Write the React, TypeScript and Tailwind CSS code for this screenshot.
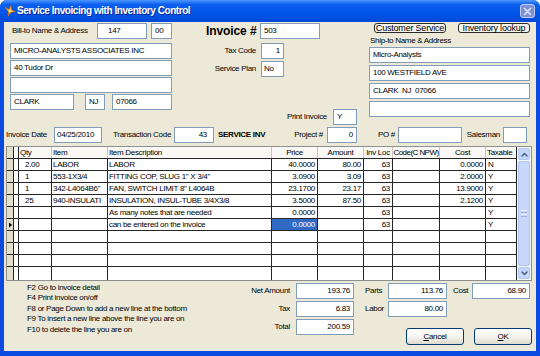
import React from "react";

type Kids = { children?: React.ReactNode };

const base = "font-['Liberation_Sans',Arial,sans-serif] text-[8px] tracking-[-0.3px] leading-none text-black";

function Field({ w, pad = "px-[3px]", right = false, children }: { w: string; pad?: string; right?: boolean } & Kids) {
  return (
    <div
      className={`${w} h-[16px] shrink-0 bg-white border border-[#7F9DB9] flex items-center overflow-hidden ${
        right ? "justify-end" : "justify-start"
      } ${pad}`}
    >
      <span className="whitespace-nowrap">{children}</span>
    </div>
  );
}

function SmallButton({ w, children }: { w: string } & Kids) {
  return (
    <div
      className={`${w} h-[10px] shrink-0 rounded-[3px] border border-[#2b2b2b] bg-[#F6F5F0] flex items-center justify-center text-[9px] tracking-[-0.2px]`}
    >
      {children}
    </div>
  );
}

function XpButton({ ml = "", children }: { ml?: string } & Kids) {
  return (
    <div
      className={`${ml} w-[58px] h-[17px] rounded-[3px] border border-[#003C74] bg-linear-to-b from-white via-[#F5F4EF] to-[#DEDBCF] flex items-center justify-center`}
    >
      {children}
    </div>
  );
}

function Chevron({ up }: { up?: boolean }) {
  return (
    <svg width="7" height="5" viewBox="0 0 7 5">
      <path
        d={up ? "M1 4 L3.5 1.5 L6 4" : "M1 1 L3.5 3.5 L6 1"}
        fill="none"
        stroke="#4D6185"
        strokeWidth="1.5"
        strokeLinecap="round"
        strokeLinejoin="round"
      />
    </svg>
  );
}

const cols = [
  { w: "w-[7px]", head: "", h: "", d: "" },
  { w: "w-[5px]", head: "", h: "", d: "" },
  { w: "w-[33px]", head: "Qty", h: "justify-start pl-[1px]", d: "justify-start pl-[6px]" },
  { w: "w-[56px]", head: "Item", h: "justify-start pl-[1px]", d: "justify-start pl-[1px]" },
  { w: "w-[164px]", head: "Item Description", h: "justify-start pl-[1px]", d: "justify-start pl-[1px]" },
  { w: "w-[46px]", head: "Price", h: "justify-center", d: "justify-end pr-[2px]" },
  { w: "w-[46px]", head: "Amount", h: "justify-center", d: "justify-end pr-[2px]" },
  { w: "w-[29px]", head: "Inv Loc", h: "justify-center", d: "justify-end pr-[2px]" },
  { w: "w-[47px]", head: "Code(C NPW)", h: "justify-center tracking-[-0.55px]", d: "justify-end pr-[2px]" },
  { w: "w-[46px]", head: "Cost", h: "justify-center", d: "justify-end pr-[2px]" },
  { w: "w-[31px]", head: "Taxable", h: "justify-start pl-[1px]", d: "justify-start pl-[2px]" },
];

const rows: string[][] = [
  ["2.00", "LABOR", "LABOR", "40.0000", "80.00", "63", "", "0.0000", "N"],
  ["1", "553-1X3/4", 'FITTING COP, SLUG 1" X 3/4"', "3.0900", "3.09", "63", "", "2.0000", "Y"],
  ["1", '342-L4064B6"', 'FAN, SWITCH LIMIT 8" L4064B', "23.1700", "23.17", "63", "", "13.9000", "Y"],
  ["25", "940-INSULATI", "INSULATION, INSUL-TUBE 3/4X3/8", "3.5000", "87.50", "63", "", "2.1200", "Y"],
  ["", "", "As many notes that are needed", "0.0000", "", "63", "", "", "Y"],
  ["", "", "can be entered on the invoice", "0.0000", "", "63", "", "", "Y"],
  ["", "", "", "", "", "", "", "", ""],
  ["", "", "", "", "", "", "", "", ""],
  ["", "", "", "", "", "", "", "", ""],
  ["", "", "", "", "", "", "", "", ""],
];

function DetailGrid() {
  return (
    <div className="ml-[2px] mt-[3px] w-[526px] h-[135px] border border-[#8E8F8F] flex overflow-hidden bg-white">
      <div className="w-[510px] flex flex-col">
        <div className="h-[12px] flex shrink-0 border-b border-[#262626] bg-[#F9F8F4]">
          {cols.map((c, i) => (
            <div
              key={i}
              className={`${c.w} shrink-0 h-full flex items-center whitespace-nowrap overflow-hidden ${c.h} ${
                i === 0 ? "bg-[#E3DFC9] border-r border-[#262626]" : ""
              } ${i === 1 ? "bg-white border-r border-[#262626]" : ""} ${
                i > 1 && i < 10 ? "border-r border-[#C9C6B8]" : ""
              } ${i === 10 ? "border-r border-[#262626]" : ""}`}
            >
              {c.head}
            </div>
          ))}
        </div>
        {rows.map((r, ri) => (
          <div
            key={ri}
            className={`flex shrink-0 ${ri === rows.length - 1 ? "h-[13px]" : "h-[12px] border-b border-[#262626]"}`}
          >
            <div className="w-[7px] shrink-0 h-full bg-[#E3DFC9] border-r border-[#262626] flex items-center">
              {ri === 5 && (
                <svg width="5" height="6" viewBox="0 0 5 6" className="ml-[2px]">
                  <path d="M0 0 L4 3 L0 6 Z" fill="#000" />
                </svg>
              )}
            </div>
            <div className="w-[5px] shrink-0 h-full bg-white border-r border-[#262626]" />
            {r.map((v, ci) => {
              const c = cols[ci + 2];
              const sel = ri === 5 && ci === 3;
              return (
                <div
                  key={ci}
                  className={`${c.w} shrink-0 h-full border-r border-[#262626] flex items-center whitespace-nowrap overflow-hidden ${c.d} ${
                    sel ? "bg-[#316AC5] text-white" : ""
                  }`}
                >
                  {v}
                </div>
              );
            })}
          </div>
        ))}
      </div>
      <div className="w-[14px] h-full flex flex-col gap-[1px] p-[1px] bg-[#F7F7F3]">
        <div className="h-[12px] shrink-0 rounded-[2px] border border-[#B2C6F4] bg-[#C5D6FC] flex items-center justify-center">
          <Chevron up />
        </div>
        <div className="flex-1 rounded-[2px] border border-[#B2C6F4] bg-[#C8D8FC] flex flex-col items-center justify-center gap-[1px]">
          <div className="w-[6px] h-px bg-[#EEF3FF]" />
          <div className="w-[6px] h-px bg-[#9DB4EA]" />
          <div className="w-[6px] h-px bg-[#EEF3FF]" />
          <div className="w-[6px] h-px bg-[#9DB4EA]" />
        </div>
        <div className="h-[12px] shrink-0 rounded-[2px] border border-[#B2C6F4] bg-[#C5D6FC] flex items-center justify-center">
          <Chevron />
        </div>
      </div>
    </div>
  );
}

export default function App() {
  return (
    <div className={`w-[540px] h-[356px] flex flex-col bg-[#0A4AE0] rounded-t-[7px] overflow-hidden ${base}`}>
      {/* title bar */}
      <div className="h-[22px] shrink-0 flex items-center pl-[4px] bg-[linear-gradient(to_bottom,#4C98FF_0%,#0D5FEE_20%,#0056E8_60%,#0049D8_100%)]">
        <svg width="12" height="12" viewBox="0 0 12 12">
          <path d="M1 2 L5 4.5 L7 0.5 L7.6 5 L11.5 6.5 L6.5 7.5 L4 11.5 L4.6 7 Z" fill="#FFB02A" stroke="#D46A00" strokeWidth="0.6" />
          <path d="M5 4.5 L7.6 5 L6.5 7.5 L4.6 7 Z" fill="#FFE27A" />
        </svg>
        <span className="ml-[1px] text-white font-bold text-[10px] tracking-[-0.45px] [text-shadow:1px_1px_#0A2A9A]">
          Service Invoicing with Inventory Control
        </span>
        <div className="ml-auto mr-[5px] w-[15px] h-[14px] rounded-[3px] border border-[#C3CDF1] bg-[#7F90DA] flex items-center justify-center">
          <svg width="9" height="9" viewBox="0 0 9 9">
            <path d="M1.5 1.5 L7.5 7.5 M7.5 1.5 L1.5 7.5" stroke="#DCE2F7" strokeWidth="1.6" strokeLinecap="round" />
          </svg>
        </div>
      </div>

      {/* client area */}
      <div className="h-[329px] mx-[4px] bg-[#ECE9D8] flex flex-col">
        <div className="h-[103px] flex shrink-0">
          {/* bill-to */}
          <div className="ml-[6px] w-[162px] pt-[1px] flex flex-col">
            <div className="h-[16px] flex items-center">
              <div className="w-[87px] pl-[2px]">Bill-to Name &amp; Address</div>
              <Field w="w-[50px]" pad="pl-[10px]">147</Field>
              <div className="w-[4px]" />
              <Field w="w-[21px]" pad="pl-[3px]">00</Field>
            </div>
            <div className="mt-[4px] flex flex-col gap-[1px]">
              <Field w="w-[162px]">MICRO-ANALYSTS ASSOCIATES INC</Field>
              <Field w="w-[162px]">40 Tudor Dr</Field>
              <Field w="w-[162px]" />
              <div className="flex">
                <Field w="w-[64px]">CLARK</Field>
                <div className="w-[11px]" />
                <Field w="w-[20px]">NJ</Field>
                <div className="w-[7px]" />
                <Field w="w-[60px]">07066</Field>
              </div>
            </div>
          </div>

          {/* invoice info */}
          <div className="w-[197px] pt-[1px] flex flex-col">
            <div className="h-[16px] flex items-center">
              <div className="ml-[34px] w-[54px] text-[12px] font-bold tracking-[-0.1px]">Invoice #</div>
              <Field w="w-[60px]">503</Field>
            </div>
            <div className="mt-[4px] h-[16px] flex items-center">
              <div className="w-[89px] text-right pr-[5px]">Tax Code</div>
              <Field w="w-[23px]" right>1</Field>
            </div>
            <div className="mt-[2px] h-[16px] flex items-center">
              <div className="w-[89px] text-right pr-[5px]">Service Plan</div>
              <Field w="w-[23px]" pad="pl-[2px]">No</Field>
            </div>
            <div className="mt-[32px] h-[16px] flex items-center">
              <div className="w-[161px] text-right pr-[6px]">Print Invoice</div>
              <Field w="w-[24px]">Y</Field>
            </div>
          </div>

          {/* ship-to */}
          <div className="w-[161px] pt-[1px] flex flex-col">
            <div className="h-[10px] flex items-center">
              <div className="ml-[5px]" />
              <SmallButton w="w-[72px]">Customer Service</SmallButton>
              <div className="w-[12px]" />
              <SmallButton w="w-[72px]">Inventory lookup</SmallButton>
            </div>
            <div className="mt-[2px] h-[11px] flex items-center pl-[1px]">Ship-to Name &amp; Address</div>
            <div className="mt-[1px] flex flex-col gap-[2px]">
              <Field w="w-[161px]">Micro-Analysts</Field>
              <Field w="w-[161px]">100 WESTFIELD AVE</Field>
              <Field w="w-[161px]">CLARK&nbsp;&nbsp;NJ&nbsp;&nbsp;07066</Field>
              <Field w="w-[161px]" />
            </div>
          </div>
        </div>

        {/* invoice date row */}
        <div className="mt-[2px] h-[16px] flex items-center shrink-0">
          <div className="ml-[2px] w-[48px]">Invoice Date</div>
          <Field w="w-[48px]" pad="pl-[2px]">04/25/2010</Field>
          <div className="ml-[11px] w-[61px]">Transaction Code</div>
          <Field w="w-[40px]" right pad="pr-[6px]">43</Field>
          <div className="ml-[4px] w-[60px] font-bold">SERVICE INV</div>
          <div className="w-[49px] text-right pr-[4px]">Project #</div>
          <Field w="w-[30px]" right>0</Field>
          <div className="w-[41px] text-right pr-[3px]">PO #</div>
          <Field w="w-[64px]" />
          <div className="w-[41px] text-right pr-[3px]">Salesman</div>
          <Field w="w-[24px]" />
        </div>

        <DetailGrid />

        {/* totals */}
        <div className="mt-[2px] flex shrink-0">
          <div className="ml-[23px] w-[200px] flex flex-col leading-[10.4px]">
            <div>F2 Go to invoice detail</div>
            <div>F4 Print invoice on/off</div>
            <div>F8 or Page Down to add a new line at the bottom</div>
            <div>F9 To insert a new line above the line you are on</div>
            <div>F10 to delete the line you are on</div>
          </div>
          <div className="flex flex-col gap-[2px]">
            <div className="h-[16px] flex items-center">
              <div className="w-[69px] text-right pr-[6px]">Net Amount</div>
              <Field w="w-[58px]" right>193.76</Field>
            </div>
            <div className="h-[16px] flex items-center">
              <div className="w-[69px] text-right pr-[6px]">Tax</div>
              <Field w="w-[58px]" right>6.83</Field>
            </div>
            <div className="h-[16px] flex items-center">
              <div className="w-[69px] text-right pr-[6px]">Total</div>
              <Field w="w-[58px]" right>200.59</Field>
            </div>
          </div>
          <div className="w-[178px] flex flex-col">
            <div className="h-[16px] flex items-center">
              <div className="w-[34px] pl-[11px]">Parts</div>
              <Field w="w-[59px]" right>113.76</Field>
              <div className="w-[25px] pl-[6px]">Cost</div>
              <Field w="w-[58px]" right>68.90</Field>
            </div>
            <div className="mt-[2px] h-[16px] flex items-center">
              <div className="w-[34px] pl-[11px]">Labor</div>
              <Field w="w-[59px]" right>80.00</Field>
            </div>
            <div className="mt-[11px] flex justify-end">
              <XpButton>
                <span>
                  <span className="underline">C</span>ancel
                </span>
              </XpButton>
              <XpButton ml="ml-[10px]">
                <span>
                  <span className="underline">O</span>K
                </span>
              </XpButton>
            </div>
          </div>
        </div>
      </div>
    </div>
  );
}
